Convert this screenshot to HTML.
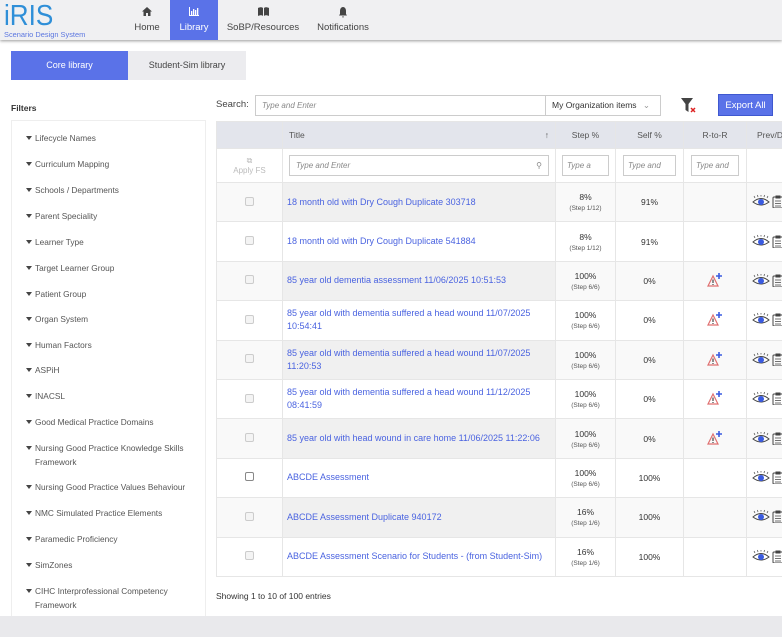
<!DOCTYPE html>
<html><head><style>
*{box-sizing:border-box;margin:0;padding:0}
body{width:782px;height:637px;overflow:hidden;background:#fff;font-family:"Liberation Sans",sans-serif;font-size:9px;color:#333;position:relative}
.nav{position:absolute;left:0;top:0;width:782px;height:40px;background:#f0f0f2;box-shadow:0 1px 3px #999}
.logo{position:absolute;left:4px;top:0px;color:#2f8fd8;font-size:29px;line-height:32px;transform:scaleX(0.9);transform-origin:left}
.logo small{position:absolute;left:0;top:30px;font-size:7.5px;white-space:nowrap;color:#5b76e0;line-height:9px;transform:scaleX(1.1);transform-origin:left}
.ni{position:absolute;top:0;height:40px;text-align:center;font-size:9.5px;color:#444;padding-top:22px}
.ni svg{position:absolute;top:7px;left:50%;margin-left:-5px}
.ni.act{background:#5a72e8;color:#fff}
.tab{position:absolute;top:51px;height:29px;line-height:29px;text-align:center;font-size:9px}
.side{position:absolute;left:11px;top:120px;width:195px;height:497px;border:1px solid #eee;border-bottom:none}
.fi{position:absolute;left:23px;font-size:8.3px;color:#555;line-height:14px;width:160px}
.fi:before{content:"";position:absolute;left:-9px;top:5px;border:3px solid transparent;border-top:4px solid #444}
.in{position:absolute;border:1px solid #ccc;background:#fff;font-style:italic;color:#888;font-size:8px;padding-left:6px}
table{position:absolute;left:216px;top:121px;border-collapse:collapse;width:580px;table-layout:fixed}
td,th{border:1px solid #e6e6e6;text-align:center;font-size:8.5px;font-weight:normal}
th{background:#e3e5ec;height:27px;color:#555}
tr.r td{height:39.4px}
tr.r:nth-child(odd) td{background:#f9f9f9}
tr.r:nth-child(odd) td.t{background:#f0f0f0}
td.t{text-align:left;padding-left:4px;padding-right:8px;color:#4a63e0;line-height:13px;font-size:9px}
.cb{display:inline-block;width:9px;height:9px;border:1px solid #ccc;border-radius:2px;background:#f4f4f4}
.st{font-size:6.5px;color:#555}
.bot{position:absolute;left:0;top:616px;width:782px;height:21px;background:#e9e9ec}
</style></head><body>
<div class="nav">
 <div class="logo">iRIS<small>Scenario Design System</small></div>
 <div class="ni" style="left:124px;width:46px">
  <svg width="10" height="9" viewBox="0 0 10 9"><path d="M5 0L0 4.5h1.5V9h2.5V6h2v3h2.5V4.5H10z" fill="#444"/></svg>Home</div>
 <div class="ni act" style="left:170px;width:48px">
  <svg width="10" height="9" viewBox="0 0 10 9"><path d="M0 0v9h10v-1H1V0zM2 4h1.3v4H2zM4 2h1.3v6H4zM6 3h1.3v5H6zM8 1h1.3v7H8z" fill="#fff"/></svg>Library</div>
 <div class="ni" style="left:222px;width:82px">
  <svg width="11" height="9" viewBox="0 0 11 9"><path d="M0 1c2-1 4-1 5 0v8c-1-1-3-1-5 0zM6 1c1-1 3-1 5 0v8c-2-1-4-1-5 0z" fill="#444"/></svg>SoBP/Resources</div>
 <div class="ni" style="left:308px;width:70px">
  <svg width="10" height="11" viewBox="0 0 10 11"><path d="M5 0C3 0 2 2 2 4v3L1 8.5h8L8 7V4C8 2 7 0 5 0zM4 9.5h2a1 1 0 0 1-2 0z" fill="#444"/></svg>Notifications</div>
</div>
<div class="tab" style="left:11px;width:117px;background:#5a72e8;color:#fff">Core library</div>
<div class="tab" style="left:128px;width:118px;background:#ececef;color:#444">Student-Sim library</div>
<div style="position:absolute;left:11px;top:103px;font-size:8.5px;font-weight:bold;color:#333">Filters</div>
<div class="side">
<div class="fi" style="top:10px">Lifecycle Names</div>
<div class="fi" style="top:36px">Curriculum Mapping</div>
<div class="fi" style="top:62px">Schools / Departments</div>
<div class="fi" style="top:88px">Parent Speciality</div>
<div class="fi" style="top:114px">Learner Type</div>
<div class="fi" style="top:140px">Target Learner Group</div>
<div class="fi" style="top:166px">Patient Group</div>
<div class="fi" style="top:191px">Organ System</div>
<div class="fi" style="top:217px">Human Factors</div>
<div class="fi" style="top:242px">ASPiH</div>
<div class="fi" style="top:268px">INACSL</div>
<div class="fi" style="top:294px">Good Medical Practice Domains</div>
<div class="fi" style="top:320px">Nursing Good Practice Knowledge Skills Framework</div>
<div class="fi" style="top:359px">Nursing Good Practice Values Behaviour</div>
<div class="fi" style="top:385px">NMC Simulated Practice Elements</div>
<div class="fi" style="top:411px">Paramedic Proficiency</div>
<div class="fi" style="top:437px">SimZones</div>
<div class="fi" style="top:463px">CIHC Interprofessional Competency Framework</div>
</div>
<div style="position:absolute;left:216px;top:99px;font-size:9.5px;color:#444">Search:</div>
<div class="in" style="left:255px;top:95px;width:291px;height:21px;line-height:19px">Type and Enter</div>
<div class="in" style="left:545px;top:95px;width:116px;height:21px;line-height:19px;font-style:normal;color:#333;font-size:8.5px">My Organization items <span style="color:#999;margin-left:4px">&#8964;</span></div>
<svg style="position:absolute;left:681px;top:98px" width="16" height="16" viewBox="0 0 16 16"><path d="M0 0h12L7.5 6v8L4.5 12V6z" fill="#444"/><path d="M10 10l4 4M14 10l-4 4" stroke="#d22" stroke-width="1.5"/></svg>
<div style="position:absolute;left:718px;top:94px;width:55px;height:22px;background:#5a72e8;color:#fff;font-size:9.5px;line-height:22px;text-align:center;border:1px solid #3f58d0">Export All</div>
<table>
<colgroup><col style="width:66px"><col style="width:273px"><col style="width:60px"><col style="width:68px"><col style="width:63px"><col></colgroup>
<tr><th></th><th style="text-align:left;padding-left:6px">Title<span style="float:right;margin-right:6px">&#8593;</span></th><th>Step %</th><th>Self %</th><th>R-to-R</th><th style="text-align:left;padding-left:10px">Prev/D</th></tr>
<tr><td style="height:34px;color:#bbb;font-size:8px">&#10697;<br>Apply FS</td>
<td><div class="in" style="position:relative;margin:0 6px;height:21px;line-height:19px;text-align:left">Type and Enter<span style="float:right;margin-right:6px;font-style:normal">&#9906;</span></div></td>
<td><div class="in" style="position:relative;margin:0 6px;height:21px;line-height:19px;text-align:left;padding-left:4px">Type a</div></td>
<td><div class="in" style="position:relative;margin:0 7px;height:21px;line-height:19px;text-align:left;padding-left:4px">Type and</div></td>
<td><div class="in" style="position:relative;margin:0 7px;height:21px;line-height:19px;text-align:left;padding-left:4px">Type and</div></td><td></td></tr>
<tr class="r"><td><span class="cb"></span></td><td class="t">18 month old with Dry Cough Duplicate 303718</td><td>8%<br><span class="st">(Step 1/12)</span></td><td>91%</td><td></td><td class="p"></td></tr>
<tr class="r"><td><span class="cb"></span></td><td class="t">18 month old with Dry Cough Duplicate 541884</td><td>8%<br><span class="st">(Step 1/12)</span></td><td>91%</td><td></td><td class="p"></td></tr>
<tr class="r"><td><span class="cb"></span></td><td class="t">85 year old dementia assessment 11/06/2025 10:51:53</td><td>100%<br><span class="st">(Step 6/6)</span></td><td>0%</td><td class="w"></td><td class="p"></td></tr>
<tr class="r"><td><span class="cb"></span></td><td class="t">85 year old with dementia suffered a head wound 11/07/2025<br>10:54:41</td><td>100%<br><span class="st">(Step 6/6)</span></td><td>0%</td><td class="w"></td><td class="p"></td></tr>
<tr class="r"><td><span class="cb"></span></td><td class="t">85 year old with dementia suffered a head wound 11/07/2025<br>11:20:53</td><td>100%<br><span class="st">(Step 6/6)</span></td><td>0%</td><td class="w"></td><td class="p"></td></tr>
<tr class="r"><td><span class="cb"></span></td><td class="t">85 year old with dementia suffered a head wound 11/12/2025<br>08:41:59</td><td>100%<br><span class="st">(Step 6/6)</span></td><td>0%</td><td class="w"></td><td class="p"></td></tr>
<tr class="r"><td><span class="cb"></span></td><td class="t">85 year old with head wound in care home 11/06/2025 11:22:06</td><td>100%<br><span class="st">(Step 6/6)</span></td><td>0%</td><td class="w"></td><td class="p"></td></tr>
<tr class="r"><td><span class="cb" style="background:#fff;border-color:#888"></span></td><td class="t">ABCDE Assessment</td><td>100%<br><span class="st">(Step 6/6)</span></td><td>100%</td><td></td><td class="p"></td></tr>
<tr class="r"><td><span class="cb"></span></td><td class="t">ABCDE Assessment Duplicate 940172</td><td>16%<br><span class="st">(Step 1/6)</span></td><td>100%</td><td></td><td class="p"></td></tr>
<tr class="r"><td><span class="cb"></span></td><td class="t" style="white-space:nowrap">ABCDE Assessment Scenario for Students - (from Student-Sim)</td><td>16%<br><span class="st">(Step 1/6)</span></td><td>100%</td><td></td><td class="p"></td></tr>
</table>
<div style="position:absolute;left:216px;top:591px;font-size:8.5px;color:#333">Showing 1 to 10 of 100 entries</div>
<div class="bot"></div>
<script>
document.querySelectorAll('td.p').forEach(function(t){t.style.textAlign='left';t.style.paddingLeft='5px';t.innerHTML='<svg width="34" height="14" viewBox="0 0 34 14"><path d="M1 8Q9 1 17 8Q9 14 1 8z" fill="none" stroke="#444" stroke-width="1"/><circle cx="9" cy="8" r="3" fill="#3a5be0"/><path d="M3 4l-1-2M6 3l-.5-2M9 2.5V1M12 3l.5-2M15 4l1-2" stroke="#444" stroke-width=".7"/><rect x="21" y="3" width="10" height="11" rx="1" fill="none" stroke="#444"/><rect x="23.5" y="1.5" width="5" height="3" fill="#444"/><path d="M23 7h6M23 9.5h6M23 12h6" stroke="#444" stroke-width=".8"/></svg>'});
document.querySelectorAll('td.w').forEach(function(t){t.innerHTML='<svg width="16" height="14" viewBox="0 0 16 14"><path d="M6 3L1 13h10z" fill="none" stroke="#e07070" stroke-width="1.2"/><path d="M6 6.5v3.5M6 11v1" stroke="#333" stroke-width="1.1"/><path d="M12 0v6M9 3h6" stroke="#3a5be0" stroke-width="1.6"/></svg>'});
</script>
</body></html>
